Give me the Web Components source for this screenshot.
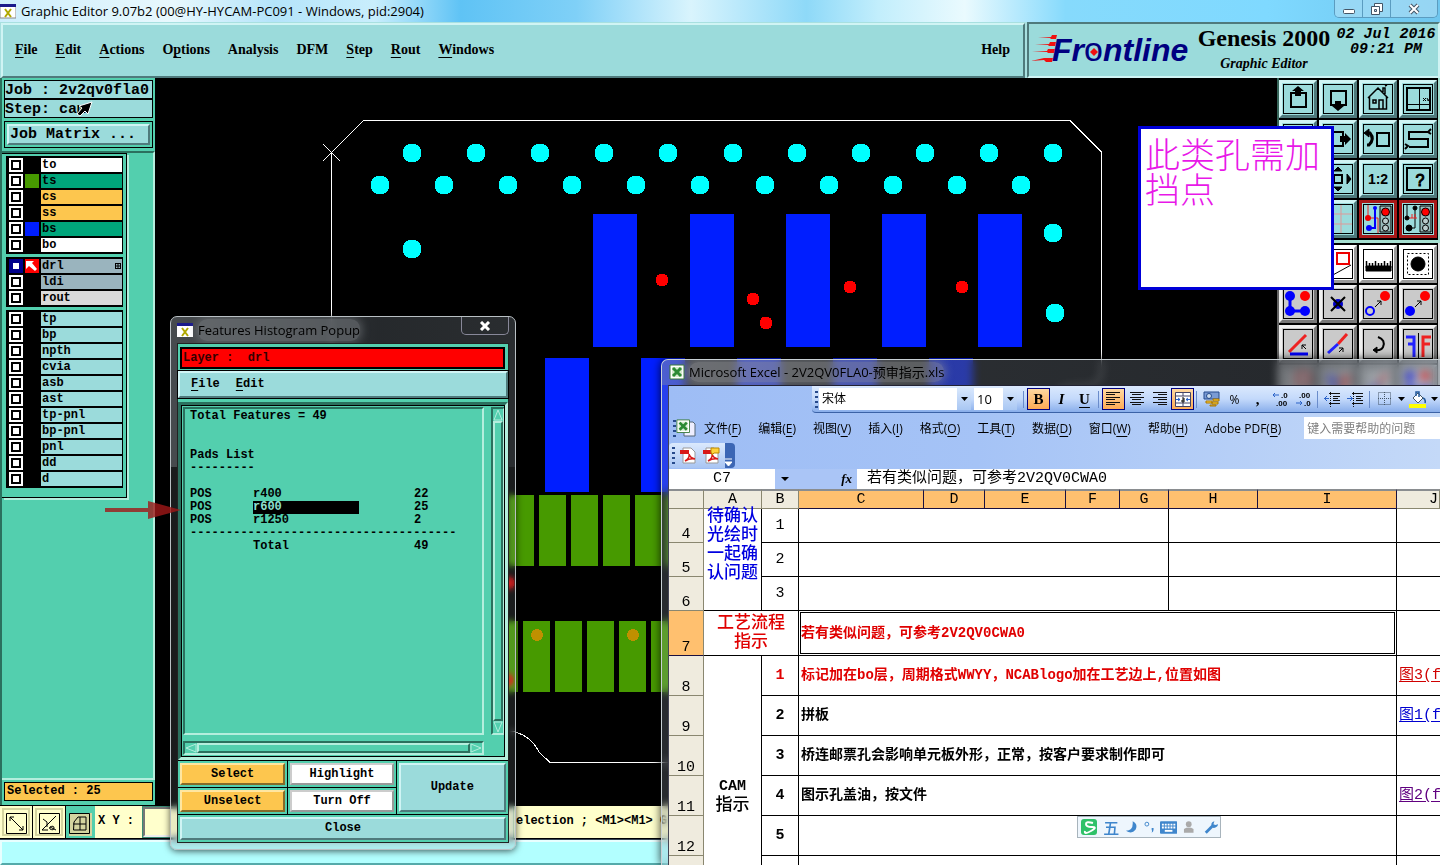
<!DOCTYPE html>
<html lang="zh-CN">
<head>
<meta charset="utf-8">
<title>Graphic Editor</title>
<style>
html,body{margin:0;height:100%;overflow:hidden;background:#000}
body{
  --pale:#9bdbdb;--pale-hi:#d0f4f4;--pale-lo:#4f7a7c;
  --teal:#53cfae;--teal-hi:#b4eedd;--teal-lo:#2b705e;
  --gold:#fdc64e;
  --mono:"Liberation Mono",monospace;
  --serif:"Liberation Serif",serif;
  --ui:"Open Sans","Noto Sans CJK SC",sans-serif;
  --song:"Liberation Mono","Noto Sans CJK SC",monospace;
  color:#000;font-family:var(--ui);font-size:12px}
</style>
</head>
<body>
<cam-desktop></cam-desktop>
<script>
const BASE = `*{box-sizing:border-box}button,input,select{font:inherit;color:inherit;margin:0;padding:0;border:0;background:none;border-radius:0;outline:0}button{cursor:pointer;white-space:nowrap}svg{display:block}u{text-underline-offset:3px}`;
function define(name, css, html) {
  customElements.define(name, class extends HTMLElement {
    constructor() {
      super();
      const root = this.attachShadow({mode: 'open'});
      root.innerHTML = `<style>${BASE}${css}</style>${typeof html === 'function' ? html(this) : html}`;
    }
  });
}

/* ---------- main window title ---------- */
define('cam-titlebar', `
:host{display:flex;align-items:center;height:22px;background:linear-gradient(90deg,#cdeefc 0,#e8f8fd 12%,#b4e4fa 19%,#c9eefc 26%,#5fc3f5 32%,#7fd0f7 40%,#d9f4fd 48%,#8ed9f8 56%,#c2eefc 61%,#eafafe 67%,#86dafc 74%,#7fd9ff 88%,#6fc6ee 100%);position:relative}
h1{margin:0 0 0 5px;font-size:13px;font-weight:400;line-height:20px;flex:1;white-space:nowrap}
.caps{display:flex;align-self:flex-start;margin-right:2px;height:18px;border:1px solid #5b9cc0;border-top:0;border-radius:0 0 5px 5px;overflow:hidden}
.caps button{width:28px;border-right:1px solid #5b9cc0;background:#a9dcf5aa}.caps button:last-child{width:46px;border:0}
.caps svg{margin:auto}`,
`<svg width="16" height="16" viewBox="0 0 16 16"><path d="M0 2h16v13H0z" fill="#fff" stroke="#888"/><path d="M0 1h16v3H0z" fill="#1a1a8c"/><path d="m5 6 6 8m0-8-6 8" stroke="#b0a800" stroke-width="2"/></svg>
<h1>Graphic Editor 9.07b2 (00@HY-HYCAM-PC091 - Windows, pid:2904)</h1>
<div class="caps">
<button aria-label="Minimize"><svg width="14" height="12"><rect x="1.500" y="6.500" width="11" height="4" rx="1" fill="#fff" stroke="#456"/></svg></button>
<button aria-label="Restore"><svg width="14" height="12"><path d="M4.500 .5h8v8h-8z" fill="#fff" stroke="#456"/><path d="M1.500 3.500h8v8h-8z" fill="#fff" stroke="#456"/><path d="M4.500 6.500h2v2h-2z" fill="#cde" stroke="#456"/></svg></button>
<button aria-label="Close"><svg width="14" height="12"><path d="m3 2 8 8m0-8-8 8" stroke="#456" stroke-width="4"/><path d="m3 2 8 8m0-8-8 8" stroke="#fff" stroke-width="2"/></svg></button>
</div>`);

/* ---------- menu strip and brand ---------- */
define('cam-menubar', `
:host{display:flex;height:56px;background:#a8e0e0}
nav{flex:1;display:flex;align-items:center;gap:18px;margin:1px 2px 0 1px;padding:0 13px 2px 12px;border:2px solid;border-color:var(--pale-hi) var(--pale-lo) var(--pale-lo) var(--pale-hi);background:var(--pale);font:bold 14px var(--serif)}
nav button:last-child{margin-left:auto}
.brand{width:413px;display:flex;border:2px solid;border-color:var(--pale-lo) var(--pale-hi) var(--pale-hi) var(--pale-lo);background:var(--pale);overflow:hidden}
.logo{flex:0 0 165px;margin-top:6px}
.name{flex:1;text-align:center;font:bold 24px/28px var(--serif);white-space:nowrap}
.name i{display:block;font-size:14px;line-height:24px}
time{display:block;width:104px;padding-top:3px;text-align:center;white-space:nowrap;font:italic bold 15px/15px var(--mono)}`,
`<nav>
<button><u>F</u>ile</button><button><u>E</u>dit</button><button><u>A</u>ctions</button><button>O<u>p</u>tions</button><button>Analysis</button><button>DFM</button><button><u>S</u>tep</button><button><u>R</u>out</button><button><u>W</u>indows</button><button>Help</button></nav>
<div class="brand">
<svg class="logo" width="165" height="42" viewBox="0 0 165 42"><g fill="#f01010"><path d="M9 8l13-1 1-2h5l-1 4h-5l-1-1zM6 15l14-1 1-2h6l-1 4h-6l-1-1zM3 22l15-1 1-2h7l-1 4h-6l-1-1zM2 31l13-3h9l-1 4h-6l-2-2z"/></g>
<text x="23" y="31" font-family="Liberation Sans" font-weight="bold" font-style="italic" font-size="32" fill="#000080">Fr<tspan font-weight="normal" font-style="normal" font-size="34">o</tspan>ntline</text><path d="m65 18 4 4-4 4-4-4z" fill="#f01010"/></svg>
<div class="name">Genesis 2000<i>Graphic Editor</i></div>
<time>02 Jul 2016<br>09:21 PM</time></div>`);

/* ---------- layer list ---------- */
define('layer-row', `
:host{display:grid;grid-template-columns:14px 14px 1fr;gap:2px;height:14px}
label{display:flex;align-items:center;padding-left:1px;font:bold 12px/14px var(--mono)}
input{appearance:none;width:14px;height:14px;background:#fff;border:2px solid #fff;box-shadow:inset 0 0 0 2px #000;display:block}
:host([active]) input{border:4px solid #00008b;box-shadow:none}
svg{margin-left:auto;margin-right:1px}`,
el => {
  const c = el.getAttribute('swatch') || '#000', bg = el.getAttribute('bg') || 'var(--pale)', n = el.getAttribute('name');
  const act = el.hasAttribute('active');
  return `<input type="checkbox" id="v"><span style="background:${c}">${act ? '<svg width="13" height="14" viewBox="0 0 13 14"><path d="M1 2h8L7 4l5 6-2 2-6-5-3 3z" fill="#fff"/></svg>' : ''}</span><label for="v" style="background:${bg}">${n}${act ? '<svg width="6" height="6" viewBox="0 0 6 6"><path d="M0 .5h6M0 3h6M0 5.500h6M.5 0v6M3 0v6M5.500 0v6" stroke="#000"/></svg>' : ''}</label>`;
});
define('layer-panel', `
:host{display:flex;flex-direction:column;padding:2px 2px 0 3px;background:var(--teal);border-left:2px solid var(--teal-lo);font:bold 15px var(--mono)}
.info{border:1px solid #000;background:var(--pale);height:19px;line-height:19px;white-space:nowrap;overflow:visible;margin-left:-1px}
.mx{margin:3px 0 0 -1px;border:1px solid #000;padding:2px;height:27px}
.mx button{width:100%;height:21px;text-align:left;padding-left:1px;background:var(--pale);border:2px solid;border-color:var(--pale-hi) var(--pale-lo) var(--pale-lo) var(--pale-hi);line-height:16px}
.body{flex:1;margin:3px -2px 0 -3px;border-top:2px solid var(--teal-lo);border-right:2px solid var(--teal-hi);border-bottom:2px solid var(--teal-hi)}
.list{width:125px;padding:2px 3px 9px 4px;border:1px solid #000;border-left:0;box-shadow:2px 2px 0 var(--teal-hi)}
.grp{background:#000;padding:2px 1px 2px 3px;margin-bottom:3px;display:flex;flex-direction:column;gap:2px}
.grp:last-child{margin-bottom:0}
.sel{margin:2px 0 4px -1px;border:1px solid #000;background:var(--gold);height:19px;font-size:12px;line-height:17px;padding-left:2px}`,
`<div class="info">Job : 2v2qv0fla0</div><div class="info">Step: cam</div>
<div class="mx"><button>Job Matrix ...</button></div>
<div class="body"><div class="list">
<div class="grp"><layer-row name="to" bg="#fff"></layer-row><layer-row name="ts" swatch="#479a00" bg="#00a57b"></layer-row><layer-row name="cs" bg="#fdc64e"></layer-row><layer-row name="ss" bg="#fdc64e"></layer-row><layer-row name="bs" swatch="#001eff" bg="#00a57b"></layer-row><layer-row name="bo" bg="#fff"></layer-row></div>
<div class="grp"><layer-row active name="drl" swatch="#f00" bg="#9ab4be"></layer-row><layer-row name="ldi" bg="#9ab4be"></layer-row><layer-row name="rout" bg="#dadada"></layer-row></div>
<div class="grp">${['tp','bp','npth','cvia','asb','ast','tp-pnl','bp-pnl','pnl','dd','d'].map(n => `<layer-row name="${n}"></layer-row>`).join('')}</div>
</div></div><div class="sel">Selected : 25</div>`);

/* ---------- board drawing ---------- */
const circles = (pts, r, f) => pts.map(([x, y]) => `<circle cx="${x}" cy="${y}" r="${r}" fill="${f}"/>`).join('');
const bars = (xs, y, w, h, f) => xs.map(x => `<rect x="${x}" y="${y}" width="${w}" height="${h}" fill="${f}"/>`).join('');
define('board-canvas', `:host{display:block;background:#000;overflow:hidden;min-width:0}svg{width:100%;height:100%}`,
`<svg shape-rendering="crispEdges"><g transform="translate(-155,-78)">
<path d="M331.500 600V152.500L363.500 120.500H1070l31.500 31.500V370q0 16-18 16h-10q-12 0-24 14M323 144l17 17M340 144l-17 17M510 731q20 3 29 21l11 10.500H900" fill="none" stroke="#fff"/>
${circles([412,476,540,604,668,733,797,861,925,989,1053].map(x => [x,153]), 9.5, '#0ff')}
${circles([380,444,508,572,636,700,765,829,893,957,1021].map(x => [x,185]), 9.5, '#0ff')}
${circles([[412,249],[1053,233],[1055,313]], 9.5, '#0ff')}
${bars([593,690,786,882,978], 214, 44, 133, '#001eff')}${bars([545,641,737,833,929], 358, 44, 134, '#001eff')}
${bars([475,507,539,571,603,635,667], 495, 27, 71, '#479a00')}${bars([491,523,555,587,619,651], 621, 27, 71, '#479a00')}
${circles([[662,280],[753,299],[766,323],[850,287],[962,287],[508,583],[507,680]], 6.5, '#f00')}${circles([[537,635],[633,635]], 6, '#c09000')}
</g></svg>`);

/* ---------- tool palette ---------- */
const ICONS = {
 up:`<path d="M8 9h15v14H8z" fill="none" stroke-width="2"/><path d="m15 2 6 5h-3v5h-6V7H9z" fill="#000" stroke="none"/>`,
 down:`<path d="M8 7h15v14H8z" fill="none" stroke-width="2"/><path d="m15 27-6-5h3v-5h6v5h3z" fill="#000" stroke="none"/>`,
 home:`<path d="M5 14 15 4l10 10M6.500 13v12h17V13M10 16h3v3h-3zM16 25v-9h4v9M20 8V4h2v6M22 2l2-1" fill="none" stroke-width="1.500"/>`,
 xy:`<path d="M4 4h23v22H4z" fill="none" stroke-width="2"/><path d="M16.500 4v22M4 20.500h23M20 14l3 3m0-3-3 3M24 14l1 2v1l2-3" fill="none"/>`,
 left:`<path d="M8 8h15v14H8z" fill="none"/>`,
 right:`<path d="M6 8h14v14H6z" fill="none" stroke-width="2"/><path d="m28 15-6-6v3h-5v6h5v3z" fill="#000" stroke="none"/>`,
 back:`<path d="M14 9h12v13H14z" fill="none" stroke-width="2"/><path d="M4 9h3q5 6-1 12H4" fill="none" stroke-width="3"/><path d="m1 9 5-4v8z"/>`,
 ess:`<path d="M25 8H6v7h19v8H6M28 5l-3 3 3 2M2 20l3 2-3 3" fill="none" stroke-width="2"/>`,
 pan:`<path d="M11 11h8v8h-8z" fill="none" stroke-width="2"/><path d="m15 3 4 4h-8zM15 27l4-4h-8zM28 15l-4-5v10zM2 15l4-5v10z"/>`,
 ratio:`<text x="15" y="20" text-anchor="middle" font-family="Liberation Sans" font-weight="bold" font-size="14" stroke="none">1:2</text>`,
 help:`<path d="M4 4h23v22H4z" fill="none" stroke-width="2"/><text x="17" y="22" text-anchor="middle" font-family="Liberation Sans" font-size="16">?</text>`,
 grid:`<path d="M8 1v28M18 1v28M1 10h28M1 20h28" stroke="#d99" fill="none"/>`,
 netb:`<path d="M5 1v13h10v15" stroke="#e22" fill="none"/><path d="M12 4v20H6" stroke="#00f" fill="none" stroke-width="2"/><circle cx="12" cy="4" r="2" fill="#00f" stroke="none"/><circle cx="6" cy="24" r="3" fill="#00f" stroke="none"/><circle cx="5" cy="14" r="3" fill="#e00" stroke="none"/><path d="M17 2h11v26H17z" fill="#9bb"/><circle cx="22.500" cy="8" r="4" fill="#f00"/><circle cx="22.500" cy="17" r="3" fill="#bcc"/><circle cx="22.500" cy="24" r="3" fill="#bcc"/>`,
 netk:`<path d="M4 1v13M12 4v20H6" fill="none"/><path d="M5 14h9M9 10v4M12 10v4" stroke="#e22"/><circle cx="12" cy="4" r="2"/><circle cx="6" cy="24" r="3"/><circle cx="4" cy="14" r="2"/><path d="M17 2h11v26H17z" fill="#9bb"/><circle cx="22.500" cy="8" r="4" fill="#f00"/><circle cx="22.500" cy="17" r="3" fill="#bcc"/><circle cx="22.500" cy="24" r="3" fill="#bcc"/>`,
 area:`<path d="M14 4h12v11H14z" fill="none" stroke="#e00" stroke-width="2"/><path d="M8 27 28 16" />`,
 ruler:`<path d="M3 17h25v5H3z"/><path d="M3.500 12v7M6.500 14v4M9.500 14v4M12.500 12v7M15.500 14v4M18.500 14v4M21.500 12v7M24.500 14v4M27.500 12v7" stroke-width="1.500"/>`,
 pad:`<path d="M4.500 4.500h21v21h-21z" fill="none" stroke-dasharray="2 2"/><circle cx="15" cy="15" r="7"/>`,
 chain:`<path d="M7 7v15h15" stroke="#00f" stroke-width="3" fill="none"/><g stroke="none"><circle cx="7" cy="7" r="5" fill="#00f"/><circle cx="7" cy="22" r="5" fill="#00f"/><circle cx="22" cy="22" r="5" fill="#00f"/><circle cx="22" cy="7" r="5" fill="#f00"/></g>`,
 del:`<circle cx="15" cy="15" r="5" fill="#00c" stroke="none"/><path d="m8 8 14 14M22 8 8 22" stroke-width="2"/>`,
 move:`<circle cx="7" cy="22" r="4" fill="none" stroke="#00f" stroke-width="2"/><circle cx="22" cy="7" r="5" fill="#f00" stroke="none"/><path d="m12 18 6-6m-4 0h4v4" fill="none"/>`,
 copy:`<circle cx="7" cy="22" r="5" fill="#00f" stroke="none"/><circle cx="22" cy="7" r="5" fill="#f00" stroke="none"/><path d="m12 18 6-6m-4 0h4v4" fill="none"/>`,
 angle:`<path d="M6 23 23 6" stroke="#e22" stroke-width="3"/><path d="M7 25h18" stroke="#00f" stroke-width="3"/><path d="m23 20-4-4m0 4v-4h4" fill="none"/>`,
 line:`<path d="M15 15 24 5" stroke="#e22" stroke-width="3"/><path d="m5 24 10-9" stroke="#22f" stroke-width="3"/><path d="m16 23 4-4m-4 0h4v4" fill="none"/>`,
 rot:`<path d="M15 8q8 3 5 10-2 4-8 3" fill="none" stroke-width="2"/><path d="m10 21 4-3v6z"/>`,
 mirror:`<path d="M3 8h8v20M5 15h5" stroke="#22f" stroke-width="3" fill="none"/><path d="M28 8h-8v20M27 15h-6" stroke="#e22" stroke-width="3" fill="none"/><path d="M15.500 4v25"/>`
};
define('tool-button', `
:host{display:block;width:38px;height:38px;--f:var(--pale);--h:var(--pale-hi);--l:var(--pale-lo)}
:host([tone=red]){--h:#a81818;--l:#a81818}
:host([tone=white]){--f:#fff;--h:#fff;--l:#999}
:host([tone=grey]){--f:#cacaca;--h:#f0f0f0;--l:#777}
button{width:38px;height:38px;display:grid;place-items:center;background:var(--f);border:3px solid;border-color:var(--h) var(--l) var(--l) var(--h)}
svg{width:30px;height:30px;stroke:#000;outline:1px solid #000;outline-offset:-1px}`,
el => `<button aria-label="${el.getAttribute('icon')}"><svg viewBox="0 0 30 30">${ICONS[el.getAttribute('icon')]}</svg></button>`);
define('tool-palette', `
:host{display:block;background:#53a898;overflow:hidden;min-height:0}
div{display:grid;grid-template-columns:repeat(4,38px);gap:2px;padding:2px 0 2px 0;background:#000;border-left:2px solid #37665a;border-bottom:3px solid #a5dfd0;border-right:2px solid #a5dfd0}
div+div{border-left-color:#666;border-bottom:0;border-right-color:#ddd}`,
(() => {
  const t = (tone, s) => s.split(' ').map(i => `<tool-button ${tone ? `tone="${tone}"` : ''} icon="${i}"></tool-button>`).join('');
  return `<div>${t('', 'up down home xy left right back ess left pan ratio help grid grid')}${t('red', 'netb netk')}</div><div>${t('white', 'area area ruler pad')}${t('grey', 'chain del move copy angle line rot mirror area mirror line chain')}</div>`;
})());

/* ---------- status rows ---------- */
define('status-strip', `
:host{display:block;font:bold 12px var(--mono)}
.row{display:flex;height:35px;background:#ffc;border-bottom:2px solid #000;border-top:1px solid #000;align-items:stretch;overflow:hidden}
.row button{width:33px;padding:5px 0 0 6px;border-right:1px solid #000;box-shadow:inset 0 0 0 2px #ffc,inset 0 0 0 4px #d4d4a0}
.row button.on{background:var(--teal);width:29px;padding-left:3px;border:0;box-shadow:inset 0 0 0 1px var(--teal)}
.on svg{background:#d4d4a0}
label{width:48px;padding-left:3px;line-height:31px;white-space:pre}
input{width:370px;border:2px solid;border-color:#777 #eee #eee #777;outline:1px solid #3a8a74;background:#ffc;margin:1px 0;padding-left:5px}
span{line-height:31px;margin-left:3px;white-space:nowrap}
.msg{height:25px;background:#b2ffff;border:2px solid;border-color:#e8ffff #5aa #5aa #e8ffff;margin:0;outline:1px solid #345}`,
`<div class="row"><button aria-label="Snap"><svg width="23" height="23" fill="none" stroke="#000"><path d="M.5 .5h20v20H.5zM4 4l13 13M4 8V4h4M17 13v4h-4"/></svg></button><button aria-label="Angle"><svg width="23" height="23" fill="none" stroke="#000"><path d="M.5 .5h20v20H.5zM3 17h6M3 17 17 3M4 6l4 3v5M11 14q4-2 4 1t-4 1q-1-2 0-2l6 3"/></svg></button><button class="on" aria-label="Grid"><svg width="23" height="23" fill="none" stroke="#000"><path d="M.5 .5h20v20H.5zM5 9l4-5h8v13H4.500zM4 11h13M11 4v13"/></svg></button><label for="xy">X Y :</label><input id="xy"><span>election ; &lt;M1&gt;&lt;M1&gt; G</span></div><div class="msg"></div>`);

/* ---------- histogram popup ---------- */
define('histogram-popup', `
:host{display:flex;flex-direction:column;padding:0 6px 6px;border:1px solid #b9c0c4;border-radius:7px;background:linear-gradient(90deg,#555a5ec0,#2b2f33b0 60%,#33373ba0) top/100% 150px no-repeat,#8a959a30;backdrop-filter:blur(3px);box-shadow:0 1px 7px #000a;overflow:hidden;font:bold 12px var(--mono)}
header{display:flex;height:26px;align-items:center;gap:5px;font:13px var(--ui);color:#000}
header b{font-weight:400;white-space:nowrap;line-height:22px;border-radius:9px;background:#8c909470;box-shadow:0 0 8px 2px #8c909470}
header button{align-self:flex-start;width:48px;height:18px;margin-left:auto;border:1px solid #889;border-top:0;border-radius:0 0 5px 5px}
header button svg{margin:auto}
.in{flex:1;display:flex;flex-direction:column;background:var(--teal);border:1px solid #222}
.layer{margin:3px 3px 2px 2px;height:22px;background:#f00;border:2px solid #000;line-height:18px;padding-left:1px;white-space:pre;color:#300}
nav{display:flex;gap:16px;height:27px;align-items:center;padding:0 11px 2px;background:var(--pale);outline:1px solid #000;border:2px solid;border-color:var(--pale-hi) var(--pale-lo) var(--pale-lo) var(--pale-hi)}
.view{flex:1;margin-top:4px;border:3px solid;border-color:var(--teal-lo) var(--teal-hi) var(--teal-hi) var(--teal-lo);padding:2px 0 2px 2px;display:grid;grid-template-columns:1fr 14px;grid-template-rows:1fr 14px;column-gap:7px;row-gap:6px;outline:1px solid #000;outline-offset:-4px}
.text{border:2px solid;border-color:var(--teal-lo) var(--teal-hi) var(--teal-hi) var(--teal-lo);padding:1px 0 0 5px;line-height:13px;white-space:nowrap;overflow:hidden}
.text p{margin:0;height:13px}.text p.gap{margin-bottom:26px}.text p.g1{margin-bottom:13px}
table{border-collapse:collapse;table-layout:fixed;width:280px}td{padding:0;height:13px}td:nth-child(1){width:63px}td:nth-child(2){width:161px}
mark{display:block;width:106px;background:#000;color:#8fe0d0}
.sb{background:var(--teal);border:2px solid;border-color:var(--teal-lo) var(--teal-hi) var(--teal-hi) var(--teal-lo);display:flex;flex-direction:column}
.sb i{flex:1;border:2px solid;border-color:var(--teal-hi) var(--teal-lo) var(--teal-lo) var(--teal-hi)}
.sb.h{flex-direction:row}
.keys{display:grid;grid-template-columns:110fr 108fr 112fr;grid-template-rows:26px 26px 27px;background:#000;gap:1px;border-top:1px solid #000}
.keys button{border:2px solid;border-color:var(--pale-hi) var(--pale-lo) var(--pale-lo) var(--pale-hi);background:var(--pale);outline:2px solid var(--teal);outline-offset:0;margin:2px;padding-bottom:1px}
.keys .g{background:var(--gold);border-color:#ffe6a0 #866a28 #866a28 #ffe6a0}.keys .w{background:#fff;border-color:#ccc #999 #999 #ccc}
.up{grid-column:3;grid-row:1/3}.cl{grid-column:1/4}`,
`<header><svg width="16" height="16" viewBox="0 0 16 16"><path d="M0 2h16v13H0z" fill="#fff"/><path d="M0 1h16v3H0z" fill="#1a1a8c"/><path d="m5 6 6 8m0-8-6 8" stroke="#b0a800" stroke-width="2"/></svg><b>Features Histogram Popup</b><button aria-label="Close"><svg width="12" height="10"><path d="m2 1 8 8m0-8-8 8" stroke="#fff" stroke-width="3"/></svg></button></header>
<div class="in"><div class="layer">Layer :  drl</div><nav><button><u>F</u>ile</button><button><u>E</u>dit</button></nav>
<div class="view"><div class="text"><p class="gap">Total Features = 49</p><p>Pads List</p><p class="g1">---------</p>
<table><tr><td>POS</td><td>r400</td><td>22</td></tr><tr><td>POS</td><td><mark>r600</mark></td><td>25</td></tr><tr><td>POS</td><td>r1250</td><td>2</td></tr></table><p>-------------------------------------</p><table><tr><td></td><td>Total</td><td>49</td></tr></table></div>
<div class="sb"><svg width="10" height="12"><path d="m5 1 4 10H1z" fill="#53cfae" stroke="#b4eedd"/></svg><i></i><svg width="10" height="12"><path d="M5 11 1 1h8z" fill="#53cfae" stroke="#b4eedd"/></svg></div>
<div class="sb h"><svg width="12" height="10"><path d="m1 5 10-4v8z" fill="#53cfae" stroke="#b4eedd"/></svg><i></i><svg width="12" height="10"><path d="M11 5 1 1v8z" fill="#53cfae" stroke="#b4eedd"/></svg></div></div>
<div class="keys"><button class="g">Select</button><button class="w">Highlight</button><button class="up">Update</button><button class="g">Unselect</button><button class="w">Turn Off</button><button class="cl">Close</button></div></div>`);

/* ---------- Excel ---------- */
const lines = (a) => `<svg width="15" height="14" stroke="#111" stroke-width="1" shape-rendering="crispEdges">${[1,3,6,8,11,13].map((y, i) => { const w = i % 2 ? 9 : 14, x = a === 'l' ? 0 : a === 'c' ? (15 - w) / 2 : 15 - w; return `<path d="M${x} ${y - .5}h${w}"/>`; }).join('')}</svg>`;
const indent = (d) => `<svg width="17" height="15" stroke="#111" shape-rendering="crispEdges"><path d="M5 1.500h11M9 4.500h7M9 6.500h5M9 8.500h7M5 11.500h11" stroke-width="1.500"/><path d="M6.500 0v15" stroke-dasharray="1 1"/><path d="${d ? 'M0 6.500h5M3 4l2 2.500L3 9' : 'M5 6.500H0m3-2.500L1 6.500 3 9'}" stroke="#2a62c8" fill="none"/></svg>`;
define('format-bar', `
:host{display:flex;align-items:center;height:27px;margin-left:143px;padding-left:2px;border-radius:0 0 0 4px;background:linear-gradient(#dbe9fd,#c3d9fb 50%,#89aeeb);border-bottom:1px solid #3b62a6;overflow:hidden}
.grip{width:3px;height:17px;flex:none;margin:0 1px;background:repeating-linear-gradient(#274a8c 0 2px,transparent 2px 5px)}
.cb{position:relative;display:flex;height:22px;background:#fff;flex:none}
.cb select{appearance:none;width:100%;padding:0 16px 0 3px;font-size:12px;line-height:20px}
.size select{font-size:13px}
.cb:after{content:"";position:absolute;right:0;top:0;width:14px;height:22px;pointer-events:none;background:linear-gradient(#d8e7fc,#a9c7f3)}
.cb svg{position:absolute;right:3px;top:9px;z-index:1;pointer-events:none}
.font{width:152px}.size{width:43px;margin-left:3px}
hr{width:1px;height:17px;border:0;background:#6a8ccb;margin:0 3px 0 2px;flex:none}
hr.first{margin-left:6px}
button{flex:none;width:23px;height:22px;display:grid;place-items:center}
button.on{background:linear-gradient(#ffd9a0,#fdab55);border:1px solid #000080}
.t{font:bold 15px var(--serif)}.drop{width:10px}`,
(() => {
  const c = '<svg width="7" height="4"><path d="M0 0h7L3.500 4z"/></svg>';
  const dec = (a, b, d) => `<svg width="18" height="16" viewBox="0 0 18 16"><text x="${a.length > 2 ? 4 : 9}" y="7" font-family="Liberation Sans" font-weight="bold" font-size="8">${a}</text><text x="${b.length > 2 ? 4 : 9}" y="15" font-family="Liberation Sans" font-weight="bold" font-size="8">${b}</text><path d="${d}" fill="none" stroke="#2a62c8"/></svg>`;
  return `<span class="grip"></span><label class="cb font"><select aria-label="Font"><option>宋体</option></select>${c}</label><label class="cb size"><select aria-label="Size"><option>10</option></select>${c}</label><hr class="first">
<button class="on t">B</button><button class="t"><i>I</i></button><button class="t"><u>U</u></button><hr>
<button class="on" aria-label="Left">${lines('l')}</button><button aria-label="Center">${lines('c')}</button><button aria-label="Right">${lines('r')}</button><button class="on" aria-label="Merge"><svg width="16" height="15"><path d="M.5 .5h15v14H.5zM.5 4h15M.5 11h15M8 1v3M8 11v3" fill="#fff" stroke="#446"/><path d="M1 7.500h4M15 7.500h-4M3 6l2 1.500L3 9M13 6l-2 1.500L13 9" stroke="#2a62c8" fill="none"/><path d="M7 6h2v4H7V8h2" fill="none" stroke="#000"/></svg></button><hr>
<button aria-label="Currency"><svg width="17" height="16"><path d="M1 1h15v7H1z" fill="#7a9bd4" stroke="#244a8c"/><circle cx="6" cy="5" r="2.500" fill="#cde" stroke="#244a8c"/><path d="M10 8h6v2h-6zM9 11h6v2H9zM3 10h6v2H3zM7 14h6v1H7z" fill="#ffd23c" stroke="#a87400"/></svg></button><button>%</button><button class="t">,</button><button aria-label="Increase decimals">${dec('.0', '.00', 'M7 4H1m2-2L1 4l2 2')}</button><button aria-label="Decrease decimals">${dec('.00', '.0', 'M1 12h6M5 10l2 2-2 2')}</button><hr>
<button aria-label="Outdent">${indent(0)}</button><button aria-label="Indent">${indent(1)}</button><hr>
<button aria-label="Borders"><svg width="14" height="14" fill="none" stroke="#456" stroke-dasharray="1 1"><path d="M.5 .5h12v12H.5zM6.500 0v13M0 6.500h13"/></svg></button><button class="drop" aria-label="More borders">${c}</button>
<button aria-label="Fill"><svg width="17" height="17"><path d="M0 13h17v4H0z" fill="#ff0"/><path d="m4 7 5-5 5 5-5 5z" fill="#fff" stroke="#456"/><path d="M7 5V1h3v5M14 7q3 1 2 5" fill="none" stroke="#235a9c" stroke-width="1.500"/></svg></button><button class="drop" aria-label="More colors">${c}</button>`;
})());

define('work-sheet', `
:host{display:block;background:#fff;overflow:hidden;flex:1;min-height:0}
table{border-collapse:separate;border-spacing:0;table-layout:fixed;width:100%;font:15px/19px var(--song)}
th{font-weight:400;background:#efebde;border-right:1px solid #8a8770;border-bottom:1px solid #8a8770;padding:0}
thead th{height:20px;border-top:2px solid #8a8d90;line-height:17px;font-size:15px}
thead th.s{background:#ffc06f;border-right-color:#1a1040;border-bottom-color:#1a1040}
tbody th{vertical-align:bottom;line-height:15px}
tbody th.s{background:#ffc06f;border-bottom-color:#1a1040}
td{border-right:1px solid #000;border-bottom:1px solid #000;padding:0 2px;white-space:nowrap}
td.n{text-align:center}td.b,td.x{font-weight:700}td.x{font-size:14px}
td.g{text-align:center;font-size:17px;font-weight:500;padding:0}
.cam{font-size:15px}
.red{color:#e00000}.blue{color:#0000e0}
td.top{vertical-align:top}td.top div{margin-top:-2px}
td.cur{box-shadow:inset 0 0 0 1px #fff,inset 0 0 0 2px #000}
td.j{border-right:0}
a{color:#0000d0;text-underline-offset:2px}a.red{color:#d00000}a.v{color:#600080}
tr.a{height:34px}tr.c{height:45px}tr.k{height:40px}
.last{text-align:right;padding-right:1px}`,
`<table><colgroup>${[35,58,37,125,61,81,54,49,89,139].map(w => `<col style="width:${w}px">`).join('')}<col></colgroup>
<thead><tr><th></th><th>A</th><th>B</th>${'CDEFGHI'.split('').map(c => `<th class="s">${c}</th>`).join('')}<th class="last">J</th></tr></thead>
<tbody>
<tr class="a"><th>4</th><td class="g blue top" rowspan="3"><div>待确认<br>光绘时<br>一起确<br>认问题</div></td><td class="n">1</td><td colspan="5"></td><td colspan="2"></td><td class="j"></td></tr>
<tr class="a"><th>5</th><td class="n">2</td><td colspan="5"></td><td colspan="2"></td><td class="j"></td></tr>
<tr class="a"><th>6</th><td class="n">3</td><td colspan="5"></td><td colspan="2"></td><td class="j"></td></tr>
<tr class="c"><th class="s">7</th><td class="g red" colspan="2">工艺流程<br>指示</td><td class="x red cur" colspan="7">若有类似问题，可参考2V2QV0CWA0</td><td class="j"></td></tr>
<tr class="k"><th>8</th><td class="g" rowspan="7"><b class="cam">CAM</b><br>指示</td><td class="n b red">1</td><td class="x red" colspan="7">标记加在bo层，周期格式WWYY，NCABlogo加在工艺边上,位置如图</td><td class="j"><a class="red" href="#p3">图3(f</a></td></tr>
<tr class="k"><th>9</th><td class="n b">2</td><td class="x" colspan="7">拼板</td><td class="j"><a href="#p1">图1(f</a></td></tr>
<tr class="k"><th>10</th><td class="n b">3</td><td class="x" colspan="7">桥连邮票孔会影响单元板外形，正常，按客户要求制作即可</td><td class="j"></td></tr>
<tr class="k"><th>11</th><td class="n b">4</td><td class="x" colspan="7">图示孔盖油，按文件</td><td class="j"><a class="v" href="#p2">图2(f</a></td></tr>
<tr class="k"><th>12</th><td class="n b">5</td><td class="x" colspan="7"></td><td class="j"></td></tr>
<tr class="k"><th></th><td class="n b"></td><td class="x" colspan="7"></td><td class="j"></td></tr>
<tr class="k"><th></th><td class="n b"></td><td class="x" colspan="7"></td><td class="j"></td></tr>
</tbody></table>`);

const XL = `<path d="M1 1h14v14H1z" fill="#fff" stroke="#3a7a3a"/><path d="M3 3h10v10H3z" fill="#d6ecd0"/><path d="m4 4 8 8m0-8-8 8" stroke="#2c8a34" stroke-width="3"/>`;
const PDF = `<path d="M3 1h8l4 4v11H3z" fill="#fff" stroke="#999"/><path d="M0 3h9v4H0z" fill="#d81818"/><path d="M5 14q5-3 4-7 1 4 6 5-5-1-10 2z" fill="none" stroke="#d81818" stroke-width="1.500"/>`;
define('excel-window', `
:host{display:flex;flex-direction:column;padding-left:6px;border:1px solid #c8d0d4;border-right:0;border-bottom:0;border-radius:7px 0 0 0;background:#9aa8b840;backdrop-filter:blur(4px);box-shadow:0 0 10px #000c;overflow:hidden}
header{display:flex;align-items:center;height:25px;gap:4px;margin-left:-6px;padding:0 0 2px 7px;background:linear-gradient(90deg,#8a90a060,#30343860 35%,#25282c70 80%,#8aa0b030)}
header b{font-weight:400;font-size:13px;line-height:20px;border-radius:9px;background:#9a9a9a70;box-shadow:0 0 8px 2px #9a9a9a70;white-space:nowrap}
.in{flex:1;min-height:0;display:flex;flex-direction:column;border-left:1px solid #445;border-top:1px solid #223;background:linear-gradient(90deg,#9ebdf5,#a5c3f6 40%,#c4d9f8)}
nav{display:flex;align-items:center;height:30px;gap:17px;padding-left:4px}
nav svg{margin-right:-9px}nav .grip{margin-right:-17px}
.grip{width:3px;height:17px;flex:none;background:repeating-linear-gradient(#274a8c 0 2px,transparent 2px 5px)}
nav input{flex:1;min-width:0;height:22px;margin-left:6px;background:#fff;padding-left:3px}
nav input::placeholder{color:#808080;opacity:1}
.pdf{display:flex;align-items:center;gap:6px;width:66px;height:25px;margin-bottom:1px;padding-left:3px;border-radius:4px;background:linear-gradient(90deg,transparent 56px,#3c66b4 56px),linear-gradient(#dbe9fd,#a9c5f3)}
.pdf .grip{margin-right:-1px}.more{margin:12px 0 0 -1px}
.fx{display:flex;height:20px;background:#aac5f6}
.fx .nb{width:106px;background:#fff;text-align:center;font:15px/20px var(--song)}
.fx .dd{width:20px;display:grid;place-items:center}
.fx i{flex:1 1 auto;max-width:62px;text-align:right;padding-right:5px;font:italic bold 13px/19px var(--serif)}
.fx .f{flex:1;background:#fff;font:15px/20px var(--song);padding-left:10px}`,
`<header><svg width="16" height="16">${XL}</svg><b>Microsoft Excel - 2V2QV0FLA0-预审指示.xls</b></header>
<div class="in"><format-bar></format-bar>
<nav><span class="grip"></span><svg width="20" height="18" viewBox="0 0 20 18"><path d="M8 3h9l2 2v12H8z" fill="#eef" stroke="#567"/><g transform="scale(.9)">${XL}</g></svg><button>文件(<u>F</u>)</button><button>编辑(<u>E</u>)</button><button>视图(<u>V</u>)</button><button>插入(<u>I</u>)</button><button>格式(<u>O</u>)</button><button>工具(<u>T</u>)</button><button>数据(<u>D</u>)</button><button>窗口(<u>W</u>)</button><button>帮助(<u>H</u>)</button><button>Adobe PDF(<u>B</u>)</button><input aria-label="Help" placeholder="键入需要帮助的问题"></nav>
<div class="pdf"><span class="grip"></span><button aria-label="PDF"><svg width="17" height="17">${PDF}</svg></button><button aria-label="PDF mail"><svg width="17" height="17">${PDF}<path d="M8 1h8v5h-5l-2 2V6H8z" fill="#ffd23c" stroke="#b80"/></svg></button><svg class="more" width="7" height="8"><path d="M0 1h7M0 4h7L3.500 8z" fill="#fff" stroke="#fff"/></svg></div>
<div class="fx"><input class="nb" aria-label="Name box" value="C7"><button class="dd" aria-label="Names"><svg width="8" height="4"><path d="M0 0h8L4 4z"/></svg></button><i>fx</i><input class="f" aria-label="Formula" value="若有类似问题，可参考2V2QV0CWA0"></div>
<work-sheet></work-sheet></div>`);

/* ---------- small floating pieces ---------- */
define('sticky-note', `:host{display:block;border:3px solid #0000d8;background:#fff;padding:6px 4px;color:#e818e8;font:300 35px/35px "Noto Sans CJK SC",sans-serif}`, `<slot></slot>`);
define('ime-bar', `:host{display:flex;align-items:center;gap:6px;border:1px solid #a8b4bc;background:#eef6fd;color:#3f86cc;padding:0 2px;font:500 16px/18px "Noto Sans CJK SC",sans-serif}`,
`<svg width="18" height="18"><rect x="1" y="1" width="16" height="16" rx="3" fill="#2fc169"/><path d="M13 5q-7-2-7 1t6 3-1 4-6 0" fill="none" stroke="#fff" stroke-width="2"/></svg><span>五</span><svg width="13" height="14" viewBox="0 0 13 14"><path d="M8 1q6 3 3 9-4 5-10 1 8 0 7-10z" fill="#3f86cc"/></svg><svg width="11" height="14" viewBox="0 0 11 14"><circle cx="3" cy="4" r="2" fill="none" stroke="#3f86cc"/><path d="M8 8h2v2q0 2-2 3 1-2 0-3z" fill="#3f86cc"/></svg><svg width="18" height="13" viewBox="0 0 18 13"><rect width="18" height="13" rx="1" fill="#3f86cc"/><path d="M2 3.500h14M2 6.500h14" stroke="#fff" stroke-width="2" stroke-dasharray="2 1"/><path d="M5 10h8" stroke="#fff" stroke-width="2"/></svg><svg width="12" height="14" viewBox="0 0 12 14"><circle cx="6" cy="4" r="3" fill="#aaa"/><path d="M1 13V9q5-3 10 0v4z" fill="#aaa"/></svg><svg width="18" height="14" viewBox="0 0 18 14"><path d="m5 13 7-7" stroke="#3f86cc" stroke-width="3"/><path d="M14 1q-4 1-3 5l2 2q4 0 5-4l-3 1-2-1z" fill="#3f86cc"/></svg>`);

define('cam-desktop', `
:host{display:grid;position:relative;height:100vh;overflow:hidden;grid-template-rows:22px 56px 1fr 60px;background:#000}
main{display:grid;grid-template-columns:155px 1fr 163px;min-height:0}
histogram-popup,excel-window,sticky-note,ime-bar,.fly{position:absolute}
histogram-popup{left:170px;top:316px;width:346px;height:534px}
excel-window{left:661px;top:359px;right:0;bottom:0}
sticky-note{left:1138px;top:126px;width:196px;height:164px}
ime-bar{left:1077px;top:816px;width:144px;height:22px}
.cursor{left:76px;top:101px}.arrow{left:104px;top:500px}`,
`<cam-titlebar></cam-titlebar><cam-menubar></cam-menubar>
<main><layer-panel></layer-panel><board-canvas></board-canvas><tool-palette></tool-palette></main>
<status-strip></status-strip>
<sticky-note>此类孔需加挡点</sticky-note>
<histogram-popup></histogram-popup>
<excel-window></excel-window><ime-bar></ime-bar>
<svg class="fly cursor" width="18" height="16"><path d="M16 1 12 13l-3-3-5 5-3-2 5-6-3-2z" stroke="#fff"/></svg>
<svg class="fly arrow" width="78" height="20"><path d="M1 8h43V1l33 9-33 9v-7H1z" fill="#a01818" fill-opacity=".8"/></svg>`);
</script>
</body>
</html>
